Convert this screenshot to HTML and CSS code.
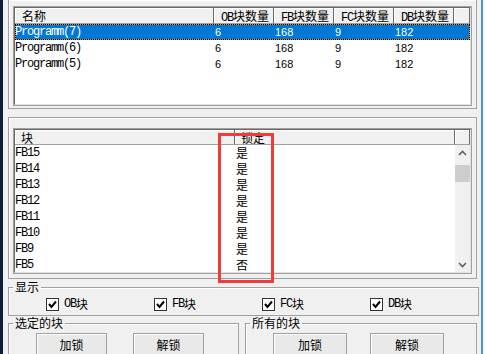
FILE: index.html
```html
<!DOCTYPE html>
<html lang="zh">

<head>
    <meta charset="UTF-8">
    <title>块锁定</title>
    <link rel="stylesheet" href="styles.css">
</head>

<body>
    <div class="desk"></div>

    <div class="dlg">
        <!-- program list -->
        <div class="grp grp-first">
            <div class="lb lb-prog">
                <div class="lb-in">
                    <div class="hdr cols-prog">
                        <div class="hc">名称</div>
                        <div class="hc"><span class="lat">OB</span>块数量</div>
                        <div class="hc"><span class="lat">FB</span>块数量</div>
                        <div class="hc"><span class="lat">FC</span>块数量</div>
                        <div class="hc"><span class="lat">DB</span>块数量</div>
                        <div class="hc"></div>
                    </div>
                    <div class="row cols-prog sel">
                        <div class="lat">Programm(7)</div>
                        <div class="num">6</div>
                        <div class="num">168</div>
                        <div class="num">9</div>
                        <div class="num">182</div>
                    </div>
                    <div class="row cols-prog">
                        <div class="lat">Programm(6)</div>
                        <div class="num">6</div>
                        <div class="num">168</div>
                        <div class="num">9</div>
                        <div class="num">182</div>
                    </div>
                    <div class="row cols-prog">
                        <div class="lat">Programm(5)</div>
                        <div class="num">6</div>
                        <div class="num">168</div>
                        <div class="num">9</div>
                        <div class="num">182</div>
                    </div>
                </div>
            </div>
        </div>

        <!-- block list -->
        <div class="grp grp-blocks">
            <div class="lb lb-blocks">
                <div class="lb-in">
                    <div class="hdr hdr2 cols-blk">
                        <div class="hc">块</div>
                        <div class="hc">锁定</div>
                        <div class="hc"></div>
                    </div>
                    <div class="blk-body">
                        <div class="blk-rows">
                            <div class="row cols-blk"><div class="lat">FB15</div><div class="yn">是</div></div>
                            <div class="row cols-blk"><div class="lat">FB14</div><div class="yn">是</div></div>
                            <div class="row cols-blk"><div class="lat">FB13</div><div class="yn">是</div></div>
                            <div class="row cols-blk"><div class="lat">FB12</div><div class="yn">是</div></div>
                            <div class="row cols-blk"><div class="lat">FB11</div><div class="yn">是</div></div>
                            <div class="row cols-blk"><div class="lat">FB10</div><div class="yn">是</div></div>
                            <div class="row cols-blk"><div class="lat">FB9</div><div class="yn">是</div></div>
                            <div class="row cols-blk"><div class="lat">FB5</div><div class="yn">否</div></div>
                        </div>
                        <div class="vscroll">
                            <svg class="arr" width="15" height="16" viewBox="0 0 15 16">
                                <polyline points="4,10 7.5,6.5 11,10" fill="none" stroke="#606060" stroke-width="1.6"/>
                            </svg>
                            <div class="thumb"></div>
                            <div class="track"></div>
                            <svg class="arr" width="15" height="16" viewBox="0 0 15 16">
                                <polyline points="4,6 7.5,9.5 11,6" fill="none" stroke="#606060" stroke-width="1.6"/>
                            </svg>
                        </div>
                    </div>
                </div>
            </div>
        </div>

        <!-- display filter -->
        <fieldset class="fs fs-show">
            <legend>显示</legend>
            <div class="checks">
                <label class="chk"><span class="box"><svg width="11" height="11" viewBox="0 0 11 11"><polyline points="2,5 4.5,8 9,2.5" fill="none" stroke="#000" stroke-width="2"/></svg></span><span class="lat">OB</span>块</label>
                <label class="chk"><span class="box"><svg width="11" height="11" viewBox="0 0 11 11"><polyline points="2,5 4.5,8 9,2.5" fill="none" stroke="#000" stroke-width="2"/></svg></span><span class="lat">FB</span>块</label>
                <label class="chk"><span class="box"><svg width="11" height="11" viewBox="0 0 11 11"><polyline points="2,5 4.5,8 9,2.5" fill="none" stroke="#000" stroke-width="2"/></svg></span><span class="lat">FC</span>块</label>
                <label class="chk"><span class="box"><svg width="11" height="11" viewBox="0 0 11 11"><polyline points="2,5 4.5,8 9,2.5" fill="none" stroke="#000" stroke-width="2"/></svg></span><span class="lat">DB</span>块</label>
            </div>
        </fieldset>

        <div class="bottom">
            <fieldset class="fs fs-sel">
                <legend>选定的块</legend>
                <div class="btns">
                    <button class="btn">加锁</button>
                    <button class="btn">解锁</button>
                </div>
            </fieldset>
            <fieldset class="fs fs-all">
                <legend>所有的块</legend>
                <div class="btns">
                    <button class="btn">加锁</button>
                    <button class="btn">解锁</button>
                </div>
            </fieldset>
        </div>
    </div>

    <div class="edge"></div>

    <div class="mark"></div>
</body>

</html>
```

FILE: styles.css
```css
* {
    box-sizing: border-box;
}

body {
    margin: 0;
    width: 485px;
    height: 354px;
    overflow: hidden;
    position: relative;
    display: flex;
    background: #f0f0f0;
    color: #000;
    font-family: "Noto Sans CJK SC", sans-serif;
    font-size: 12px;
    line-height: 16px;
}

.lat {
    font-family: "Liberation Mono", "Noto Sans CJK SC", monospace;
    letter-spacing: -1.2px;
}

.num {
    font-family: "Liberation Sans", Arial, sans-serif;
    font-size: 11px;
    padding-left: 1px;
}

.desk {
    width: 3px;
    background: #0e1c34;
    flex: none;
}

.dlg {
    width: 478px;
    padding: 0 4px 0 5px;
    flex: none;
}

.edge {
    width: 4px;
    flex: none;
    border-left: 2px solid #4f93d6;
    background: #f7f7f7;
}

/* group boxes */
.grp {
    border: 1px solid #a0a0a0;
    box-shadow: inset 1px 1px 0 #fff;
    padding: 0 4px;
}

.grp-first {
    border-top: none;
    padding-top: 6px;
    padding-bottom: 2px;
}

.grp-blocks {
    margin-top: 8px;
    padding-top: 10px;
    padding-bottom: 4px;
}

/* list boxes */
.lb {
    border: 1px solid #a0a0a0;
    background: #fff;
}

.lb-in {
    border: 1px solid;
    border-color: #696969 #e3e3e3 #e3e3e3 #696969;
    height: 100%;
    overflow: hidden;
}

.lb-prog {
    height: 100px;
}

.lb-blocks {
    height: 146px;
}

.cols-prog {
    display: grid;
    grid-template-columns: 199px 60px 60px 60px 60px 1fr;
}

.cols-blk {
    display: grid;
    grid-template-columns: 220px 220px 1fr;
}

.blk-rows .cols-blk {
    grid-template-columns: 220px 220px;
}

.hdr {
    height: 16px;
    background: #f0f0f0;
}

.hdr2 {
    height: 15px;
    line-height: 15px;
}

.hc {
    padding-left: 7px;
    border-right: 1px solid #696969;
    border-bottom: 1px solid #a0a0a0;
    box-shadow: inset 1px 1px 0 #fff;
    white-space: nowrap;
    overflow: hidden;
}

.hdr2 .hc {
    padding-left: 6px;
}

.row {
    height: 16px;
    white-space: nowrap;
}

.row.sel {
    background: #0078d7;
    color: #fff;
    box-shadow: inset 0 0 0 1px #e8902c;
    outline: 1px dotted #000;
    outline-offset: -1px;
}

.yn {
    padding-left: 1px;
}

.blk-body {
    display: flex;
    height: 128px;
}

.blk-rows {
    width: 440px;
}

.vscroll {
    width: 15px;
    background: #f0f0f0;
    display: flex;
    flex-direction: column;
}

.arr {
    display: block;
    flex: none;
}

.thumb {
    height: 17px;
    margin-top: 4px;
    background: #cdcdcd;
}

.track {
    flex: 1;
}

/* fieldsets */
.fs {
    margin: 0;
    border: 1px solid #a0a0a0;
    box-shadow: inset 1px 1px 0 #fff;
    padding: 0;
}

.fs legend {
    margin-left: 4px;
    padding: 0 2px;
    line-height: 12px;
    height: 12px;
}

.fs-show {
    margin-top: 2px;
    height: 35px;
}

.checks {
    display: flex;
    padding: 4px 0 0 37px;
}

.chk {
    width: 108px;
    display: flex;
    align-items: center;
    height: 14px;
}

.box {
    width: 13px;
    height: 13px;
    border: 1px solid #333;
    background: #fff;
    margin-right: 5px;
    display: flex;
    align-items: center;
    justify-content: center;
}

.box svg {
    display: block;
}

.bottom {
    display: flex;
    gap: 6px;
    margin-top: 1px;
}

/* the dialog is cut off by the screen edge here */
.fs-sel,
.fs-all {
    height: 37px;
    border-bottom: none;
}

.fs-sel {
    width: 231px;
}

.fs-all {
    width: 232px;
}

.btns {
    display: flex;
    padding: 4px 0 0 27px;
    gap: 26px;
}

.fs-all .btns {
    gap: 23px;
}

.btn {
    width: 71px;
    height: 21px;
    padding: 0;
    font-family: "Noto Sans CJK SC", sans-serif;
    font-size: 12px;
    line-height: 19px;
    color: #000;
    background: #e9e9e9;
    border: 1px solid #a0a0a0;
    border-bottom: none;
    box-shadow: inset 1px 1px 0 #fff;
}

.fs-all .btn {
    width: 74px;
}

/* red highlight drawn over the list */
.mark {
    position: absolute;
    left: 218px;
    top: 133px;
    width: 56px;
    height: 150px;
    border: 3px solid #ee3b3b;
}
```
